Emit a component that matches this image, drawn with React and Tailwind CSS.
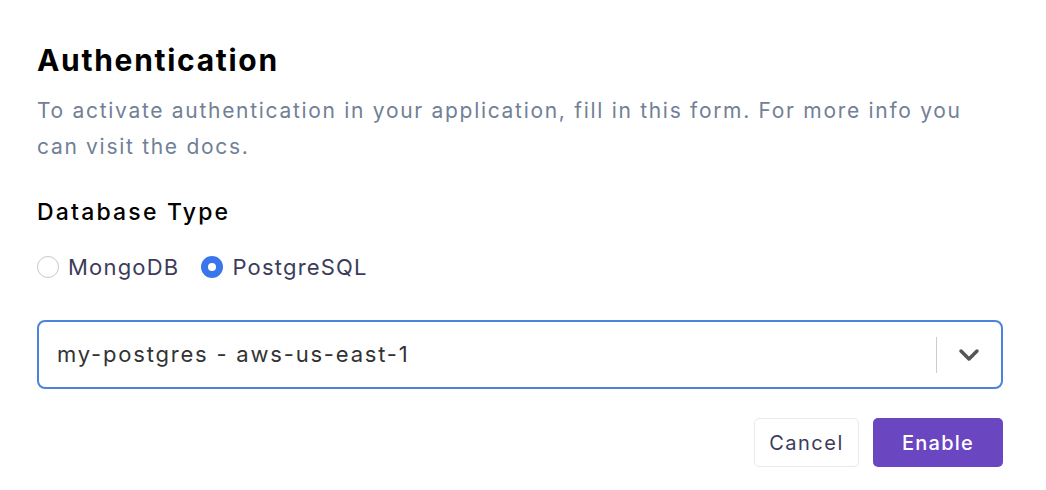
import React, { useState } from "react";

const App = () => {
  const [db, setDb] = useState("postgres");

  return (
    <div
      className="min-h-screen w-[1046px] bg-white pl-[37px] pt-[42px]"
      style={{ fontFamily: "Inter, 'Noto Sans', sans-serif" }}
    >
      <div className="w-[966px]">
        {/* Header */}
        <h1 className="text-[30px] leading-[36px] font-bold text-black tracking-[1.7px]">
          Authentication
        </h1>
        <p className="mt-[15px] w-[966px] text-[21px] leading-[36px] text-[#718096] tracking-[1.7px]">
          To activate authentication in your application, fill in this form. For more info you can visit the docs.
        </p>

        {/* Database type */}
        <h2 className="mt-[31px] text-[23px] leading-[32px] font-medium text-black tracking-[2.2px]">
          Database Type
        </h2>
        <div className="mt-[23px] flex h-[32px] items-center gap-[22px]">
          <label className="flex items-center gap-[9px] cursor-pointer" onClick={() => setDb("mongo")}>
            <span
              className={
                db === "mongo"
                  ? "flex h-[22px] w-[22px] items-center justify-center rounded-full bg-[#3a76eb]"
                  : "h-[22px] w-[22px] rounded-full border border-[#c9c9c9] bg-white"
              }
            >
              {db === "mongo" && <span className="h-[8px] w-[8px] rounded-full bg-white" />}
            </span>
            <span className="text-[22px] text-[#3c3c5a] tracking-[1.2px]">MongoDB</span>
          </label>
          <label className="flex items-center gap-[9px] cursor-pointer" onClick={() => setDb("postgres")}>
            <span
              className={
                db === "postgres"
                  ? "flex h-[22px] w-[22px] items-center justify-center rounded-full bg-[#3a76eb]"
                  : "h-[22px] w-[22px] rounded-full border border-[#c9c9c9] bg-white"
              }
            >
              {db === "postgres" && <span className="h-[8px] w-[8px] rounded-full bg-white" />}
            </span>
            <span className="text-[22px] text-[#3c3c5a] tracking-[1.2px]">PostgreSQL</span>
          </label>
        </div>

        {/* Select */}
        <div className="mt-[37px] flex h-[69px] items-center rounded-[8px] border-2 border-[#4a84de] bg-white">
          <div className="flex-1 pl-[18px] text-[22px] text-[#333333] tracking-[1.8px]">
            my-postgres - aws-us-east-1
          </div>
          <div className="h-[36px] w-px bg-[#cccccc]" />
          <div className="flex w-[64px] items-center justify-center">
            <svg width="22" height="14" viewBox="0 0 22 14" fill="none">
              <path d="M3 3 L11 11 L19 3" stroke="#555555" strokeWidth="3.5" strokeLinecap="round" strokeLinejoin="round" />
            </svg>
          </div>
        </div>

        {/* Actions */}
        <div className="mt-[29px] flex justify-end gap-[14px]">
          <button className="h-[49px] w-[105px] rounded-[5px] border border-[#e8e8ee] bg-white text-[20px] text-[#3c3c5a] tracking-[1.5px]">
            Cancel
          </button>
          <button className="h-[49px] w-[130px] rounded-[5px] bg-[#6b46c1] text-[20px] font-medium text-white tracking-[1.2px]">
            Enable
          </button>
        </div>
      </div>
    </div>
  );
};

export default App;
